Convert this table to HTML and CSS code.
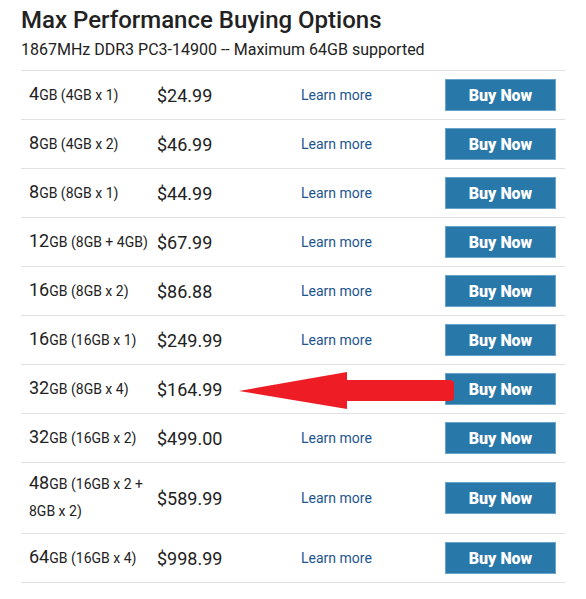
FILE: index.html
```html
<!DOCTYPE html>
<html>
<head>
<meta charset="utf-8">
<link rel="stylesheet" href="styles.css">
</head>
<body>
<div class="page">
  <h1 class="title">Max Performance Buying Options</h1>
  <p class="subtitle">1867MHz DDR3 PC3-14900 -- Maximum 64GB supported</p>
  <div class="table">
    <div class="row"><div class="cap"><span class="big">4</span>GB (4GB x 1)</div><div class="price">$24.99</div><a class="learn">Learn more</a><button class="buy">Buy Now</button></div>
    <div class="row"><div class="cap"><span class="big">8</span>GB (4GB x 2)</div><div class="price">$46.99</div><a class="learn">Learn more</a><button class="buy">Buy Now</button></div>
    <div class="row"><div class="cap"><span class="big">8</span>GB (8GB x 1)</div><div class="price">$44.99</div><a class="learn">Learn more</a><button class="buy">Buy Now</button></div>
    <div class="row"><div class="cap"><span class="big">12</span>GB (8GB + 4GB)</div><div class="price">$67.99</div><a class="learn">Learn more</a><button class="buy">Buy Now</button></div>
    <div class="row"><div class="cap"><span class="big">16</span>GB (8GB x 2)</div><div class="price">$86.88</div><a class="learn">Learn more</a><button class="buy">Buy Now</button></div>
    <div class="row"><div class="cap"><span class="big">16</span>GB (16GB x 1)</div><div class="price">$249.99</div><a class="learn">Learn more</a><button class="buy">Buy Now</button></div>
    <div class="row"><div class="cap"><span class="big">32</span>GB (8GB x 4)</div><div class="price">$164.99</div><a class="learn">Learn more</a><button class="buy">Buy Now</button></div>
    <div class="row"><div class="cap"><span class="big">32</span>GB (16GB x 2)</div><div class="price">$499.00</div><a class="learn">Learn more</a><button class="buy">Buy Now</button></div>
    <div class="row"><div class="cap"><span class="big">48</span>GB (16GB x 2 + 8GB x 2)</div><div class="price">$589.99</div><a class="learn">Learn more</a><button class="buy">Buy Now</button></div>
    <div class="row"><div class="cap"><span class="big">64</span>GB (16GB x 4)</div><div class="price">$998.99</div><a class="learn">Learn more</a><button class="buy">Buy Now</button></div>
  </div>
  <svg class="arrow" width="230" height="50" viewBox="0 0 230 50">
    <polygon points="2,22 110,3 110,11 214,11 217,13 217,30 214,32 110,32 110,40" fill="#ee1c25"/>
  </svg>
</div>
</body>
</html>
```

FILE: styles.css
```css
html, body {
  margin: 0;
  padding: 0;
  background: #fff;
}
body {
  font-family: Roboto, "Liberation Sans", sans-serif;
  color: #222;
}
.page {
  position: relative;
  padding: 6px 21px 0 21px;
}
.title {
  margin: 0;
  font-size: 24px;
  font-weight: 500;
  line-height: 28px;
  color: #222;
}
.subtitle {
  margin: 0;
  font-size: 16px;
  line-height: 24px;
  padding-top: 4px;
  padding-bottom: 8px;
  color: #222;
}
.table {
  border-top: 1px solid #e0e0e4;
}
.row {
  display: grid;
  grid-template-columns: 128px 144px 144px 111px;
  align-items: center;
  padding: 8px 9px 8px 8px;
  border-bottom: 1px solid #e0e0e4;
}
.cap {
  font-size: 14px;
  line-height: 27px;
  padding-right: 6px;
}
.big {
  font-size: 18px;
  line-height: 18px;
}
.price {
  font-size: 18px;
  line-height: 27px;
}
.learn {
  font-size: 14px;
  color: #1d5590;
  text-decoration: none;
}
.buy {
  height: 32px;
  width: 111px;
  box-sizing: border-box;
  background: #2878aa;
  border: 1px solid #6aa3c9;
  color: #fff;
  font-family: Roboto, "Liberation Sans", sans-serif;
  font-weight: 900;
  font-size: 16px;
  padding: 0;
  cursor: pointer;
}
.arrow {
  position: absolute;
  left: 237px;
  top: 369px;
}
```
